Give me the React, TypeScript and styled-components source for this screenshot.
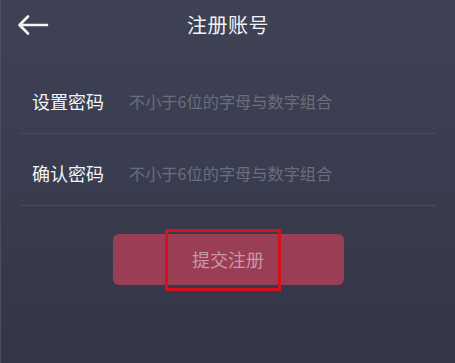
import React from "react";
import styled, { createGlobalStyle } from "styled-components";

const Global = createGlobalStyle`
  html, body { margin: 0; padding: 0; }
  body { font-family: "Noto Sans CJK SC", "Noto Sans", sans-serif; }
`;

const Page = styled.div`
  width: 455px;
  height: 363px;
  background: linear-gradient(180deg, #3e4254 0%, #3a3d4f 45%, #343646 100%);
  display: flex;
  flex-direction: column;
  overflow: hidden;
  box-sizing: border-box;
  border-left: 1px solid #4a4e60;
`;

const Header = styled.header`
  position: relative;
  height: 48px;
  display: flex;
  align-items: center;
  justify-content: center;
`;

const BackButton = styled.button`
  position: absolute;
  left: 16px;
  top: 13px;
  width: 32px;
  height: 24px;
  padding: 0;
  border: none;
  background: transparent;
  display: flex;
  align-items: center;
  justify-content: center;
`;

const Title = styled.h1`
  margin: 0;
  font-size: 20px;
  font-weight: 400;
  color: #f2f2f4;
  letter-spacing: 0.5px;
`;

const Form = styled.div`
  margin-top: 14px;
  padding: 0 19px 0 20px;
  display: flex;
  flex-direction: column;
`;

const Row = styled.div`
  height: 72px;
  padding: 6px 0 0 11px;
  box-sizing: border-box;
  border-bottom: 1px solid #484c5c;
  display: flex;
  align-items: center;
  gap: 25px;
`;

const Label = styled.span`
  font-size: 18px;
  color: #f4f4f6;
  width: 72px;
  white-space: nowrap;
`;

const Placeholder = styled.span`
  font-size: 16.2px;
  color: #6a6e7d;
  white-space: nowrap;
`;

const ButtonWrap = styled.div`
  position: relative;
  margin: 28px auto 0;
  width: 231px;
  height: 51px;
`;

const Submit = styled.button`
  width: 100%;
  height: 100%;
  border: none;
  border-radius: 6px;
  background: #9a3e56;
  color: #c79aa7;
  font-family: inherit;
  font-size: 18px;
  display: flex;
  align-items: center;
  justify-content: center;
  padding: 0 0 2px;
`;

const Highlight = styled.div`
  position: absolute;
  left: 52px;
  top: -5px;
  width: 116px;
  height: 62px;
  box-sizing: border-box;
  border: 3px solid #d4121c;
  pointer-events: none;
`;

export default function App() {
  return (
    <>
      <Global />
      <Page>
        <Header>
          <BackButton aria-label="back">
            <svg width="32" height="24" viewBox="0 0 32 24">
              <path
                d="M30 12 H3 M11 3.5 L2.5 12 L11 20.5"
                fill="none"
                stroke="#f4f4f6"
                strokeWidth="2.6"
                strokeLinecap="round"
                strokeLinejoin="round"
              />
            </svg>
          </BackButton>
          <Title>注册账号</Title>
        </Header>
        <Form>
          <Row>
            <Label>设置密码</Label>
            <Placeholder>不小于6位的字母与数字组合</Placeholder>
          </Row>
          <Row>
            <Label>确认密码</Label>
            <Placeholder>不小于6位的字母与数字组合</Placeholder>
          </Row>
        </Form>
        <ButtonWrap>
          <Submit>提交注册</Submit>
          <Highlight />
        </ButtonWrap>
      </Page>
    </>
  );
}
